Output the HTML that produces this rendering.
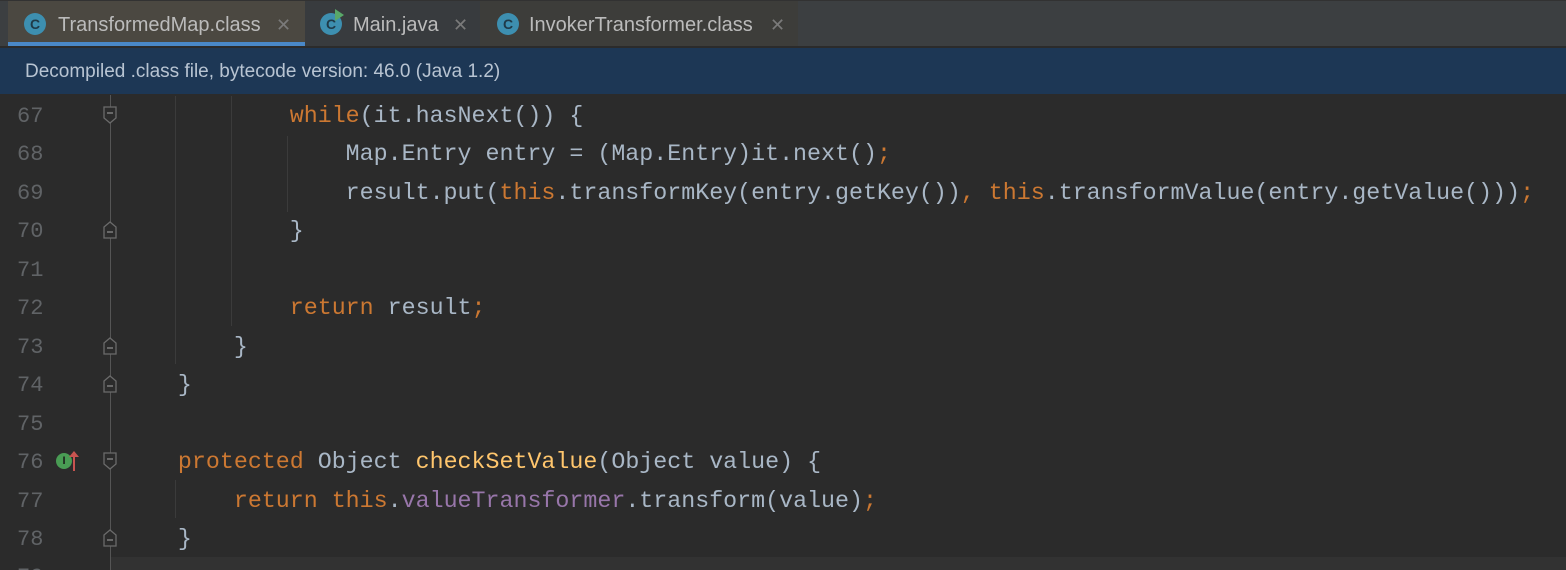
<!DOCTYPE html>
<html style="overflow:hidden;height:570px"><head><style>
body{margin:0;width:1566px;height:570px;overflow:hidden;background:#2b2b2b;font-family:"Liberation Sans",sans-serif;position:relative}
.tabs{position:absolute;left:0;top:0;width:1566px;height:46px;background:#3c3f41;border-top:1px solid #323232;box-sizing:border-box}
.tab{position:absolute;top:0;height:46px;color:#bbbbbb;font-size:20px;line-height:48px}
.ic{position:absolute;top:12px;width:22px;height:22px;border-radius:50%;background:#3d8fb0;color:#1f3a48;font-size:14px;line-height:22px;text-align:center;font-weight:bold}
.x{position:absolute;color:#7a7a7a;font-size:18px}
.banner{position:absolute;left:0;top:48px;width:1566px;height:46px;background:#1d3755;color:#b8c4d2;font-size:19px;line-height:48px;padding-left:25px;box-sizing:border-box}
.sep{position:absolute;left:0;top:46px;width:1566px;height:2px;background:#2b2b2b}
.ln{position:absolute;left:17px;width:30px;color:#606366;font-family:"Liberation Mono",monospace;font-size:22px}
.code{position:absolute;left:122px;font-family:"Liberation Mono",monospace;font-size:23.3px;color:#a9b7c6;white-space:pre}
.k{color:#cc7832}.m{color:#ffc66d}.f{color:#9876aa}
.g{position:absolute;width:1px;background:#3b3b3b}
.fold{position:absolute;left:103px;width:14px;height:18px}
</style></head><body>
<div class="tabs">
 <div class="tab" style="left:8px;width:297px;background:#4b4841">
  <div class="ic" style="left:16px">C</div><span style="position:absolute;left:50px">TransformedMap.class</span><span class="x" style="left:268px">✕</span>
 </div>
 <div style="position:absolute;left:8px;top:41px;width:297px;height:5px;background:#4a88c7"></div>
 <div class="tab" style="left:305px;width:175px;background:#383b3e">
  <div class="ic" style="left:15px">C</div><div style="position:absolute;left:30px;top:8px;width:0;height:0;border-top:6px solid transparent;border-bottom:6px solid transparent;border-left:9px solid #59a869"></div><span style="position:absolute;left:48px">Main.java</span><span class="x" style="left:148px">✕</span>
 </div>
 <div class="tab" style="left:480px;width:318px;background:#3d3d3a">
  <div class="ic" style="left:17px">C</div><span style="position:absolute;left:49px">InvokerTransformer.class</span><span class="x" style="left:290px">✕</span>
 </div>
</div>
<div class="sep"></div>
<div class="banner">Decompiled .class file, bytecode version: 46.0 (Java 1.2)</div>
<div style="position:absolute;left:110px;top:557px;width:1456px;height:13px;background:#323232"></div>
<div class="g" style="left:110px;top:95px;height:475px;background:#555"></div>
<div class="g" style="left:175px;top:96px;height:268px"></div>
<div class="g" style="left:231px;top:96px;height:230px"></div>
<div class="g" style="left:287px;top:136px;height:76px"></div>
<div class="g" style="left:175px;top:480px;height:38px"></div>
<div id="c"></div>
<div style="position:absolute;left:56px;top:453px;width:16px;height:16px;border-radius:50%;background:#499c54;color:#1b1b1b;font-size:11px;line-height:16px;text-align:center;font-weight:bold">I</div>
<div style="position:absolute;left:73px;top:452px;width:2px;height:19px;background:#c75450"></div>
<div style="position:absolute;left:69px;top:451px;width:0;height:0;border-left:5px solid transparent;border-right:5px solid transparent;border-bottom:6px solid #c75450"></div>
<script>
var lines=[
['67','        <span class="k">while</span>(it.hasNext()) {','d'],
['68','            Map.Entry entry = (Map.Entry)it.next()<span class="k">;</span>',''],
['69','            result.put(<span class="k">this</span>.transformKey(entry.getKey())<span class="k">, this</span>.transformValue(entry.getValue()))<span class="k">;</span>',''],
['70','        }','u'],
['71','',''],
['72','        <span class="k">return </span>result<span class="k">;</span>',''],
['73','    }','u'],
['74','}','u'],
['75','',''],
['76','<span class="k">protected </span>Object <span class="m">checkSetValue</span>(Object value) {','d'],
['77','    <span class="k">return this</span>.<span class="f">valueTransformer</span>.transform(value)<span class="k">;</span>',''],
['78','}','u'],
['79','','']];
var h='';
for(var i=0;i<lines.length;i++){
 var t=96+i*38.45;
 h+='<div class="ln" style="top:'+(t+8)+'px">'+lines[i][0]+'</div>';
 h+='<div class="code" style="top:'+(t+7)+'px;left:122px">    '+lines[i][1]+'</div>';
 var f=lines[i][2];
 if(f){
  var pts=f=='d'?'1,1 13,1 13,12 7,17 1,12':'1,6 7,1 13,6 13,17 1,17';
  h+='<svg class="fold" style="top:'+(t+10)+'px" viewBox="0 0 14 18"><polygon points="'+pts+'" fill="#2b2b2b" stroke="#6b6b6b" stroke-width="1.3"/><line x1="4" y1="'+(f=='d'?7:11)+'" x2="10" y2="'+(f=='d'?7:11)+'" stroke="#8a8a8a" stroke-width="1.3"/></svg>';
 }
}
document.getElementById('c').innerHTML=h;
</script>
</body></html>
